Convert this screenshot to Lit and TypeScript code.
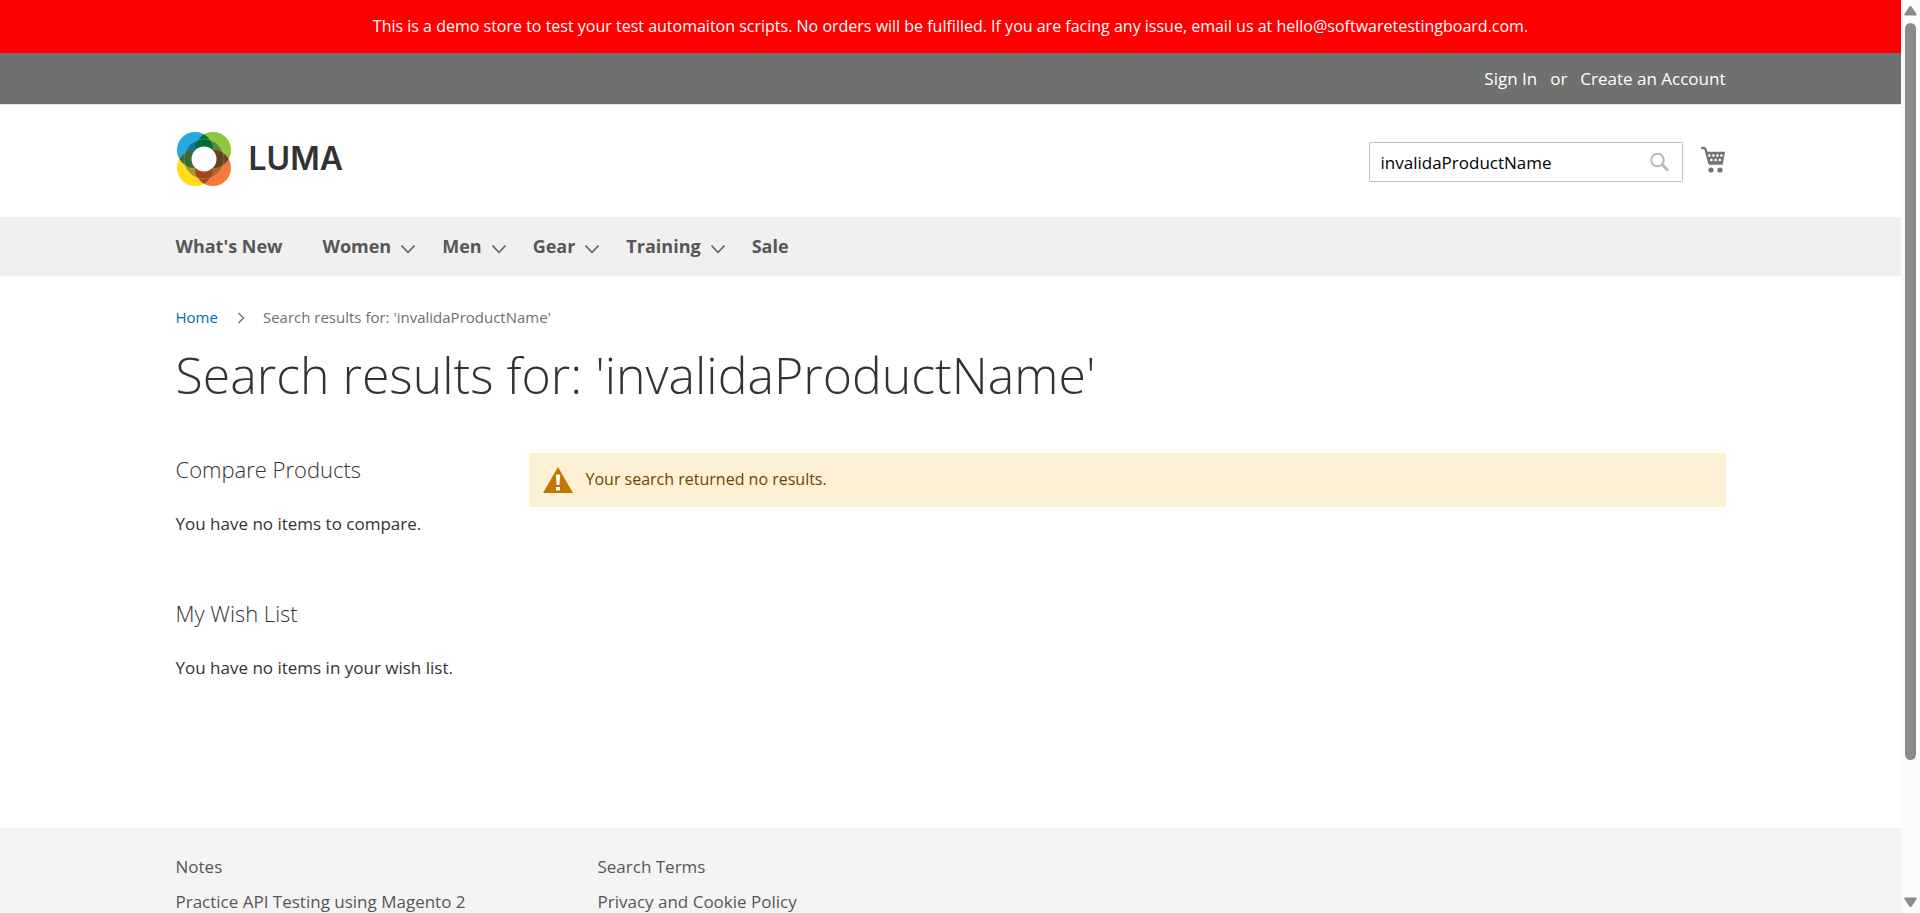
import { LitElement, html, css, svg } from "lit";
import { customElement, property, state } from "lit/decorators.js";

@customElement("luma-logo")
class LumaLogo extends LitElement {
  static styles = css`
    :host { display: block; }
    .logo { display: flex; align-items: center; gap: 18px; padding-left: 1px; color: #333; text-decoration: none; }
    .mark { display: block; width: 54px; height: 54px; }
    .word { font: 600 32px/54px Inter, sans-serif; }
  `;
  render() {
    return html`
      <a class="logo" href="#" aria-label="LUMA store">
        <svg class="mark" viewBox="0 0 54 54" aria-hidden="true">
          <defs>
            <clipPath id="tl"><circle cx="18" cy="18" r="18" /></clipPath>
            <clipPath id="tr"><circle cx="36" cy="18" r="18" /></clipPath>
            <clipPath id="bl"><circle cx="18" cy="36" r="18" /></clipPath>
            <clipPath id="br"><circle cx="36" cy="36" r="18" /></clipPath>
          </defs>
          <circle cx="18" cy="18" r="18" fill="#26a8e0" />
          <circle cx="36" cy="18" r="18" fill="#8dc63f" />
          <circle cx="18" cy="36" r="18" fill="#ffde17" />
          <circle cx="36" cy="36" r="18" fill="#f4793b" />
          <circle cx="27" cy="27" r="20" fill="#0d76a3" clip-path="url(#tl)" />
          <circle cx="27" cy="27" r="20" fill="#598b3c" clip-path="url(#tr)" />
          <circle cx="27" cy="27" r="20" fill="#a89632" clip-path="url(#bl)" />
          <circle cx="27" cy="27" r="20" fill="#b5642c" clip-path="url(#br)" />
          <g clip-path="url(#tl)"><circle cx="36" cy="18" r="18" fill="#006b38" /></g>
          <g clip-path="url(#bl)"><circle cx="36" cy="36" r="18" fill="#a3461f" /></g>
          <g clip-path="url(#tl)"><circle cx="18" cy="36" r="18" fill="#3a6b35" /></g>
          <g clip-path="url(#tr)"><circle cx="36" cy="36" r="18" fill="#64441f" /></g>
          <circle cx="27" cy="27" r="20" fill="none" stroke="#fff" stroke-opacity=".35" stroke-width=".6" />
          <circle cx="27" cy="27" r="12.5" fill="#fff" />
        </svg>
        <span class="word">LUMA</span>
      </a>
    `;
  }
}

@customElement("page-scrollbar")
class PageScrollbar extends LitElement {
  static styles = css`
    :host { display: flex; flex-direction: column; align-items: center; width: 19px; background: #fcfcfc; }
    .arrow { display: block; width: 13px; height: 23px; fill: #8b8b8b; }
    .track { flex: 1; display: flex; justify-content: center; width: 100%; }
    .thumb { width: 11px; height: 85%; border-radius: 6px; background: #8b8b8b; }
  `;
  render() {
    return html`
      <svg class="arrow" viewBox="0 0 13 23" aria-hidden="true"><path d="M5.300 6.800q1.200-1.500 2.400 0l4.700 7q.8 1.800-.8 1.800H1.400q-1.600 0-.8-1.800z" /></svg>
      <div class="track"><div class="thumb"></div></div>
      <svg class="arrow" viewBox="0 0 13 23" aria-hidden="true"><path d="M5.300 16.200q1.200 1.500 2.400 0l4.700-7q.8-1.800-.8-1.800H1.400q-1.600 0-.8 1.800z" /></svg>
    `;
  }
}

interface NavItem { label: string; menu: boolean; }

@customElement("app-root")
class AppRoot extends LitElement {
  @state() private query = "invalidaProductName";
  @property({ attribute: false }) nav: NavItem[] = [
    { label: "What's New", menu: false },
    { label: "Women", menu: true },
    { label: "Men", menu: true },
    { label: "Gear", menu: true },
    { label: "Training", menu: true },
    { label: "Sale", menu: false },
  ];
  @property({ attribute: false }) footerLinks = [
    ["Notes", "Practice API Testing using Magento 2"],
    ["Search Terms", "Privacy and Cookie Policy"],
  ];
  @property({ attribute: false }) blocks = [
    { title: "Compare Products", text: "You have no items to compare." },
    { title: "My Wish List", text: "You have no items in your wish list." },
  ];

  static styles = css`
    :host {
      display: flex;
      height: 100vh;
      overflow: hidden;
      background: #fff;
      color: #333;
      font: 400 17px/25px "Open Sans", sans-serif;
    }
    * { box-sizing: border-box; }
    a { color: inherit; text-decoration: none; }
    h1, h2, p, ul, ol { margin: 0; padding: 0; }
    ul, ol { list-style: none; }
    .page { flex: 1; min-width: 0; display: flex; flex-direction: column; overflow: hidden; }
    .page > * { flex-shrink: 0; }
    .wrap { width: 100%; max-width: 1600px; margin: 0 auto; padding: 0 25px; }
    .notice { padding: 14px 25px; background: #f00; color: #fff; font-size: 16px; text-align: center; }
    .panel { background: #6e716e; color: #fff; border-bottom: 1px solid #e0e0e0; }
    .panel ul { display: flex; justify-content: flex-end; gap: 13px; padding: 13px 0; }
    .header { display: flex; align-items: flex-start; justify-content: space-between; padding-top: 27px; padding-bottom: 31px; }
    .tools { display: flex; align-items: flex-start; gap: 18px; padding-top: 10px; }
    .search { display: flex; align-items: center; width: 314px; height: 40px; border: 1px solid #c2c2c2; border-radius: 1px; }
    .search input { flex: 1; min-width: 0; height: 38px; padding: 0 11px; border: 0; background: none; outline: none; color: #000; font: inherit; }
    button { display: flex; margin: 0; padding: 0; border: 0; background: none; cursor: pointer; }
    .go { padding: 0 13px 0 12px; }
    .glass { width: 19px; height: 20px; }
    .cart { padding-top: 3px; }
    .cart svg { width: 25px; height: 28px; }
    .nav { background: #f0f0f0; color: #575757; font-size: 18px; font-weight: 700; }
    .nav ul { display: flex; padding: 17px 0; }
    .nav a { display: flex; align-items: center; gap: 9px; }
    .nav li { margin-right: 26px; }
    .nav li:first-child { margin-right: 40px; }
    .chev { width: 16px; height: 10px; margin-top: 4px; }
    .crumbs { display: flex; align-items: center; padding-top: 31px; color: #707070; font-size: 15px; line-height: 21px; }
    .crumbs a { color: #006bb4; }
    .crumbs svg { width: 8px; height: 12px; margin: 0 18px 0 19px; }
    h1 { padding-top: 19px; font-size: 50px; font-weight: 300; line-height: 56px; }
    .columns { display: grid; grid-template-columns: 353px 1fr; align-items: start; padding-top: 50px; padding-bottom: 148px; }
    .block h2 { font-size: 22px; font-weight: 300; line-height: 32px; }
    .block p { padding-top: 26px; }
    .block + .block { padding-top: 61px; }
    .warning { display: flex; align-items: center; gap: 13px; min-height: 54px; padding: 0 14px; background: #fdf0d5; color: #6f4400; font-size: 16px; }
    .warning svg { width: 30px; height: 26px; }
    .warning span { padding-bottom: 1px; }
    footer { flex: 1 0 auto; background: #f4f4f4; color: #575757; }
    .links { display: flex; padding-top: 26px; }
    .links ul { width: 422px; }
    .links li { padding-bottom: 10px; }
  `;

  private chevron() {
    return html`<svg class="chev" viewBox="0 0 16 10" fill="none" stroke="#575757" stroke-width="1.5" aria-hidden="true">${svg`<path d="M1.500 1.500 8 8.500l6.500-7" />`}</svg>`;
  }

  render() {
    return html`
      <div class="page">
        <div class="notice">This is a demo store to test your test automaiton scripts. No orders will be fulfilled. If you are facing any issue, email us at hello@softwaretestingboard.com.</div>
        <div class="panel">
          <div class="wrap">
            <ul><li><a href="#">Sign In</a></li><li>or</li><li><a href="#">Create an Account</a></li></ul>
          </div>
        </div>
        <header class="wrap header">
          <luma-logo></luma-logo>
          <div class="tools">
            <form class="search" @submit=${(e: Event) => e.preventDefault()}>
              <input type="text" aria-label="Search" .value=${this.query} @input=${(e: Event) => (this.query = (e.target as HTMLInputElement).value)} />
              <button class="go" type="submit" aria-label="Search">
                <svg class="glass" viewBox="0 0 19 20" fill="none" stroke="#b8b8b8" aria-hidden="true">
                  <circle cx="7.500" cy="8" r="6.300" stroke-width="2" /><path d="m12 12.500 6 6" stroke-width="2.600" />
                </svg>
              </button>
            </form>
            <button class="cart" type="button" aria-label="My Cart">
              <svg viewBox="0 0 25 28" aria-hidden="true">
                <path d="M1.200 3q2.600-.6 3.500 1.600L8.300 18" fill="none" stroke="#757575" stroke-width="2.400" stroke-linecap="round" />
                <path d="M4.500 6.800h19.500L21.700 19.800H8z" fill="#757575" />
                <g fill="#fff"><circle cx="8.400" cy="10.500" r="1.300" /><circle cx="12.400" cy="10.500" r="1.300" /><circle cx="16.400" cy="10.500" r="1.300" /><circle cx="20.400" cy="10.500" r="1.300" /><circle cx="10.400" cy="15" r="1.300" /><circle cx="14.600" cy="15" r="1.300" /><circle cx="18.800" cy="15" r="1.300" /></g>
                <circle cx="10" cy="25" r="2.600" fill="#757575" /><circle cx="19" cy="25" r="2.600" fill="#757575" />
              </svg>
            </button>
          </div>
        </header>
        <nav class="nav">
          <div class="wrap">
            <ul>${this.nav.map((n) => html`<li><a href="#">${n.label}${n.menu ? this.chevron() : ""}</a></li>`)}</ul>
          </div>
        </nav>
        <main class="wrap">
          <ol class="crumbs">
            <li><a href="#">Home</a></li>
            <svg viewBox="0 0 8 12" fill="none" stroke="#707070" stroke-width="1.400" aria-hidden="true"><path d="m1.500 1 5 5-5 5" /></svg>
            <li>Search results for: '${this.query}'</li>
          </ol>
          <h1>Search results for: '${this.query}'</h1>
          <div class="columns">
            <aside>
              ${this.blocks.map((b) => html`<section class="block"><h2>${b.title}</h2><p>${b.text}</p></section>`)}
            </aside>
            <div class="warning" role="alert">
              <svg viewBox="0 0 30 26" aria-hidden="true">
                <path d="M15 0 30 26H0z" fill="#c07600" /><path d="M12.800 7.500h4.400l-.8 10.500h-2.800zM13 20h4v3.600h-4z" fill="#fff" />
              </svg>
              <span>Your search returned no results.</span>
            </div>
          </div>
        </main>
        <footer>
          <div class="wrap links">
            ${this.footerLinks.map((col) => html`<ul>${col.map((l) => html`<li><a href="#">${l}</a></li>`)}</ul>`)}
          </div>
        </footer>
      </div>
      <page-scrollbar></page-scrollbar>
    `;
  }
}
